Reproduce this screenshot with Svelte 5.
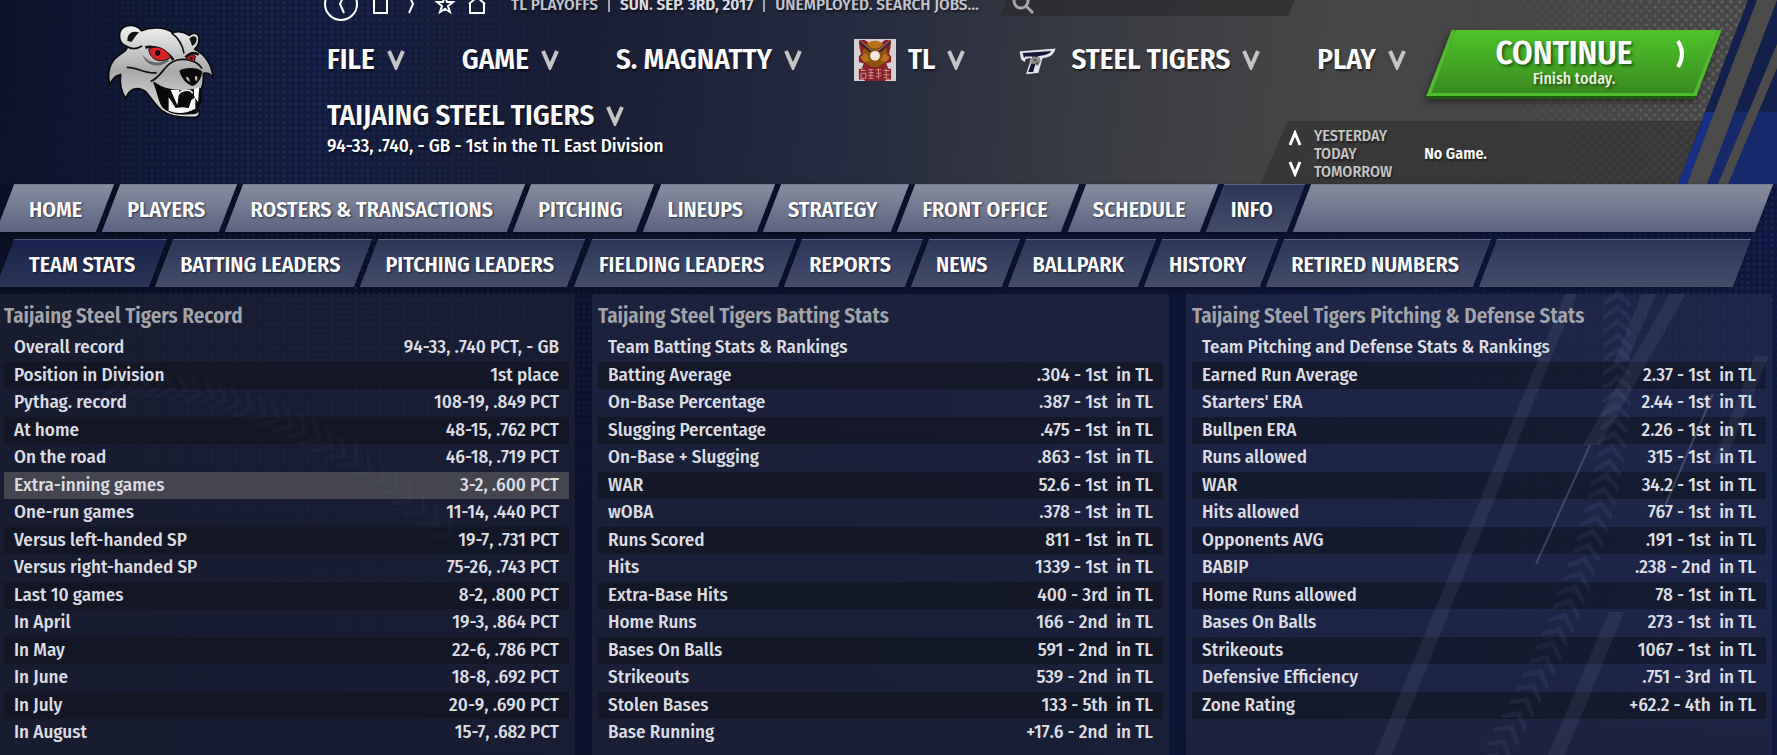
<script lang="ts">
	type Row = [label: string, value: string]
	type Panel = { title: string; subtitle?: string; rows: Row[] }

	const menus = [
		{ label: 'FILE' },
		{ label: 'GAME' },
		{ label: 'S. MAGNATTY' },
		{ label: 'TL', logo: 'league' },
		{ label: 'STEEL TIGERS', logo: 'team' },
		{ label: 'PLAY' }
	]

	const sections = [
		'HOME',
		'PLAYERS',
		'ROSTERS & TRANSACTIONS',
		'PITCHING',
		'LINEUPS',
		'STRATEGY',
		'FRONT OFFICE',
		'SCHEDULE',
		'INFO'
	]

	const pages = [
		'TEAM STATS',
		'BATTING LEADERS',
		'PITCHING LEADERS',
		'FIELDING LEADERS',
		'REPORTS',
		'NEWS',
		'BALLPARK',
		'HISTORY',
		'RETIRED NUMBERS'
	]

	const panels: Panel[] = [
		{
			title: 'Taijaing Steel Tigers Record',
			rows: [
				['Overall record', '94-33, .740 PCT, - GB'],
				['Position in Division', '1st place'],
				['Pythag. record', '108-19, .849 PCT'],
				['At home', '48-15, .762 PCT'],
				['On the road', '46-18, .719 PCT'],
				['Extra-inning games', '3-2, .600 PCT'],
				['One-run games', '11-14, .440 PCT'],
				['Versus left-handed SP', '19-7, .731 PCT'],
				['Versus right-handed SP', '75-26, .743 PCT'],
				['Last 10 games', '8-2, .800 PCT'],
				['In April', '19-3, .864 PCT'],
				['In May', '22-6, .786 PCT'],
				['In June', '18-8, .692 PCT'],
				['In July', '20-9, .690 PCT'],
				['In August', '15-7, .682 PCT']
			]
		},
		{
			title: 'Taijaing Steel Tigers Batting Stats',
			subtitle: 'Team Batting Stats & Rankings',
			rows: [
				['Batting Average', '.304 - 1st  in TL'],
				['On-Base Percentage', '.387 - 1st  in TL'],
				['Slugging Percentage', '.475 - 1st  in TL'],
				['On-Base + Slugging', '.863 - 1st  in TL'],
				['WAR', '52.6 - 1st  in TL'],
				['wOBA', '.378 - 1st  in TL'],
				['Runs Scored', '811 - 1st  in TL'],
				['Hits', '1339 - 1st  in TL'],
				['Extra-Base Hits', '400 - 3rd  in TL'],
				['Home Runs', '166 - 2nd  in TL'],
				['Bases On Balls', '591 - 2nd  in TL'],
				['Strikeouts', '539 - 2nd  in TL'],
				['Stolen Bases', '133 - 5th  in TL'],
				['Base Running', '+17.6 - 2nd  in TL']
			]
		},
		{
			title: 'Taijaing Steel Tigers Pitching & Defense Stats',
			subtitle: 'Team Pitching and Defense Stats & Rankings',
			rows: [
				['Earned Run Average', '2.37 - 1st  in TL'],
				["Starters' ERA", '2.44 - 1st  in TL'],
				['Bullpen ERA', '2.26 - 1st  in TL'],
				['Runs allowed', '315 - 1st  in TL'],
				['WAR', '34.2 - 1st  in TL'],
				['Hits allowed', '767 - 1st  in TL'],
				['Opponents AVG', '.191 - 1st  in TL'],
				['BABIP', '.238 - 2nd  in TL'],
				['Home Runs allowed', '78 - 1st  in TL'],
				['Bases On Balls', '273 - 1st  in TL'],
				['Strikeouts', '1067 - 1st  in TL'],
				['Defensive Efficiency', '.751 - 3rd  in TL'],
				['Zone Rating', '+62.2 - 4th  in TL']
			]
		}
	]

	let activeSection = $state('INFO')
	let activePage = $state('TEAM STATS')
	let selected = $state('Extra-inning games')

	// tyre tread: chevrons that follow a curve, turning as they go
	const rightTread = Array.from({ length: 34 }, (_, i) => {
		const y = i * 14
		const t = Math.max(0, (y - 80) / 385)
		return { x: 206 - 124 * t ** 1.8, y, turn: 4 + 30 * t }
	})
	const leftTread = Array.from({ length: 26 }, (_, i) => {
		const t = i / 25
		return { x: 120 + 330 * t, y: 90 + 150 * t ** 2, turn: 100 + 35 * t }
	})
</script>

{#snippet chevron()}
	<svg class="chevron" viewBox="0 0 18 20" aria-hidden="true"><path d="M2 1L9 17L16 1" /></svg>
{/snippet}

{#snippet tabs(items: string[], active: string, pick: (item: string) => void)}
	{#each items as item (item)}
		<a href="#{item.toLowerCase().replaceAll(' ', '-')}" class:active={item === active} onclick={() => pick(item)}>{item}</a>
	{/each}
	<span class="filler"></span>
{/snippet}

<div class="app">
	<header>
		<svg class="stripes" viewBox="0 0 300 184" aria-hidden="true">
			<defs>
				<pattern id="holes" width="9" height="9" patternUnits="userSpaceOnUse">
					<circle cx="2" cy="2" r="2" />
					<circle cx="7" cy="7" r="2" />
				</pattern>
				<linearGradient id="fade">
					<stop offset="0" stop-color="#000" />
					<stop offset="1" stop-color="#fff" />
				</linearGradient>
				<mask id="fade-mask"><rect width="300" height="184" fill="url(#fade)" /></mask>
			</defs>
			<g mask="url(#fade-mask)"><rect width="300" height="184" fill="url(#holes)" class="holes" /></g>
			<path fill="#13204d" d="M271 0H300V112H228Z" />
			<path fill="#16296b" d="M228 112H300V184H201Z" />
			<path fill="#173086" d="M228 112H239L210 184H201Z" />
			<path fill="#4b4b4b" d="M280 0H300L230 184H210Z" />
			<path fill="#4b4b4b" d="M300 44V68L251 184H241Z" />
		</svg>

		<svg class="team-logo" viewBox="0 0 420 360" role="img" aria-label="Steel Tigers">
			<defs>
				<linearGradient id="fur" x1="0" y1="0" x2="0" y2="1">
					<stop offset="0" stop-color="#f2f2f2" />
					<stop offset=".5" stop-color="#a9a9ab" />
					<stop offset="1" stop-color="#e4e4e4" />
				</linearGradient>
			</defs>
			<g stroke="#0a0a0c" stroke-width="5" stroke-linejoin="round">
				<path fill="url(#fur)" d="M108 108C82 98 82 58 108 49C128 42 148 50 154 62C186 48 226 52 248 68C266 62 284 66 298 76C308 66 326 68 327 86C328 100 322 110 314 118C344 132 368 166 369 204C362 192 352 188 340 190C342 214 336 234 330 246C336 262 332 280 322 292C332 304 330 318 318 321C276 324 240 320 216 302C194 284 184 264 168 246C144 226 116 236 108 266C92 244 88 222 92 194C78 196 66 206 60 226C50 192 58 156 84 138C96 128 108 126 112 112Z" />
				<path fill="#080809" d="M192 218C224 242 268 250 330 236C334 258 332 280 320 294C328 304 320 312 304 310C268 314 234 308 218 290C206 270 204 244 192 218Z" />
			</g>
			<path fill="#111" d="M112 92C112 68 130 60 148 68C136 74 132 88 124 96Z" />
			<path fill="#111" d="M298 88C304 76 320 76 320 88C320 98 312 106 306 108C304 100 302 94 298 88Z" />
			<path fill="#666" d="M158 134C176 160 210 164 230 148C238 144 240 152 228 158C200 176 166 164 158 134Z" />
			<path fill="#fff" d="M242 240L268 240L262 286ZM312 236L328 232L324 276L312 258ZM236 262L246 276L256 294L278 292L296 294L304 270L316 262L316 296Q276 318 236 302Z" />
			<path fill="none" stroke="#eee" stroke-width="5" d="M264 256C270 238 302 236 308 250" />
			<path fill="#0b0b0b" d="M268 182C286 170 324 172 336 184C336 204 322 224 308 228C290 222 274 206 268 182Z" />
			<path fill="#bbb" d="M288 200Q298 200 300 216Q288 210 288 200ZM316 198Q326 196 320 214Q312 208 316 198Z" />
			<g fill="none" stroke="#0e0e10" stroke-width="5">
				<path d="M108 108C126 120 140 118 156 108M244 68C262 82 278 104 282 130M110 172C140 170 166 194 200 188M182 214C214 204 222 160 262 150C290 144 322 152 336 176" />
				<path stroke-width="8" d="M166 112C200 106 234 126 250 150M286 142C300 128 314 126 326 134" />
			</g>
			<path fill="#d8222a" stroke="#111" stroke-width="3" d="M176 118C198 102 230 116 242 142C214 160 182 154 176 118Z" />
			<circle cx="203" cy="129" r="8" fill="#180406" />
			<path fill="#c4161e" stroke="#111" stroke-width="3" d="M288 148C296 132 310 130 316 138L313 156Z" />
			<circle cx="304" cy="145" r="4" fill="#180406" />
		</svg>

		<div class="status">
			<div class="shortcuts">
				<button aria-label="Back" class="back"><svg viewBox="0 0 36 36"><circle cx="18" cy="18" r="16" /><path d="M21 9L17 18L21 27" /></svg></button>
				<button aria-label="Stop"><svg viewBox="0 0 20 24"><path d="M3 3V21H16V3Z" /></svg></button>
				<button aria-label="Forward"><svg viewBox="0 0 20 24"><path d="M6 3L10 12L6 21" /></svg></button>
				<button aria-label="Favourites"><svg viewBox="0 0 20 24"><path d="M10 4L12 10H18L13 14L15 20L10 17L5 20L7 14L2 10H8Z" /></svg></button>
				<button aria-label="Home"><svg viewBox="0 0 20 24"><path d="M2 12L10 5L18 12M3 11V21H17V11" /></svg></button>
			</div>
			<p>
				<span>TL PLAYOFFS</span><i></i><strong>SUN. SEP. 3RD, 2017</strong><i></i><a href="#jobs">UNEMPLOYED. SEARCH JOBS...</a>
			</p>
			<label class="search">
				<svg viewBox="0 0 24 24" aria-hidden="true"><circle cx="10" cy="9" r="7" /><path d="M15 14L22 21" /></svg>
				<input type="search" aria-label="Search" />
			</label>
		</div>

		<div class="menu-row">
			<nav class="menu">
				{#each menus as menu (menu.label)}
					<button>
						{#if menu.logo === 'league'}
							<svg class="logo" viewBox="0 0 120 120" aria-hidden="true">
								<path fill="#d5d0d4" d="M0 0H120V120H0Z" />
								<path fill="#8a2029" d="M14 4L30 2L44 12Q60 -2 76 12L90 2L106 4L104 26L100 42L106 50V66L92 70L98 84L106 86V116H92L88 120H32L28 116H14V86L22 84L28 70L14 66V50L20 42L16 26Z" />
								<circle cx="60" cy="44" r="36" fill="#8c540f" />
								<path fill="#b8731a" d="M18 52L34 40L44 62L28 66ZM102 52L86 40L76 62L92 66ZM36 14Q60 -4 84 14L70 26H50Z" />
								<path stroke="#47242a" stroke-width="11" d="M18 8L50 36M102 8L70 36" />
								<path stroke="#a9765c" stroke-width="3" d="M20 6L52 34M100 6L68 34" />
								<circle cx="60" cy="48" r="14" fill="#f1e7da" />
								<path fill="none" stroke="#c98d84" stroke-width="3" d="M18 90H34M20 98H34V112H20V98M26 84L20 90M40 88H56M42 96H56M48 86V112M40 104H56M42 112H56M62 88H78M70 84V114M64 98L78 98M62 108L78 104M84 90H102M92 84V114M84 102H102M86 110L100 112" />
							</svg>
						{:else if menu.logo === 'team'}
							<svg class="logo" viewBox="0 0 120 120" aria-hidden="true">
								<path fill="#e3e3e8" stroke="#20212c" stroke-width="2" d="M6 34L112 26Q106 50 84 54L74 56L62 98L24 102L34 72L38 56L26 58L22 68L10 58Z" />
								<path fill="#16183a" d="M16 40L98 34Q90 46 66 48L54 52L56 60L46 94L32 94L42 66L44 50L24 50L20 54Z" />
								<path fill="#8b8b8b" d="M46 50L64 52L68 62L60 78L48 70L38 72L40 58Z" />
								<path fill="#3b3b3b" d="M48 58H56V62H48ZM54 66L62 68L56 74Z" />
							</svg>
						{/if}
						{menu.label}
						{@render chevron()}
					</button>
				{/each}
			</nav>
			<button class="continue">
				<span class="face">
					<span class="action">CONTINUE</span>
					<small>Finish today.</small>
				</span>
				<svg viewBox="0 0 12 30" aria-hidden="true"><path d="M3 2Q11 15 3 28" /></svg>
			</button>
		</div>

		<div class="team-row">
			<div class="team">
				<h1>TAIJAING STEEL TIGERS {@render chevron()}</h1>
				<p>94-33, .740, - GB - 1st in the TL East Division</p>
			</div>
			<div class="games">
				<div class="steps">
					<button aria-label="Previous day"><svg viewBox="0 0 14 16"><path d="M2 15L7 3L12 15" /></svg></button>
					<button aria-label="Next day"><svg viewBox="0 0 14 16"><path d="M2 1L7 13L12 1" /></svg></button>
				</div>
				<ul>
					<li>YESTERDAY</li>
					<li>TODAY</li>
					<li>TOMORROW</li>
				</ul>
				<strong>No Game.</strong>
			</div>
		</div>
	</header>

	<nav class="tabs sections">
		{@render tabs(sections, activeSection, (item) => (activeSection = item))}
	</nav>
	<nav class="tabs pages">
		{@render tabs(pages, activePage, (item) => (activePage = item))}
	</nav>

	<main>
		<svg class="streaks left" viewBox="0 0 500 470" aria-hidden="true">
			{#each leftTread as mark}
				<path class="tread" d="M-14 8L0 -6L14 8L14 14L0 1L-14 14Z" transform="translate({mark.x} {mark.y}) rotate({mark.turn})" />
			{/each}
		</svg>

		{#each panels as panel (panel.title)}
			<section>
				<h2>{panel.title}</h2>
				<table>
					<tbody>
						{#if panel.subtitle}
							<tr><th colspan="2">{panel.subtitle}</th></tr>
						{/if}
						{#each panel.rows as [label, value] (label)}
							<tr class:selected={label === selected} onmouseenter={() => (selected = label)}>
								<th scope="row">{label}</th>
								<td>{value}</td>
							</tr>
						{/each}
					</tbody>
				</table>
			</section>
		{/each}

		<svg class="streaks right" viewBox="0 0 360 468" aria-hidden="true">
			<path d="M153 0H165L-23 468H-40Z" />
			<path d="M230 0H244L215 68H202ZM258 0H274L188 151H171Z" />
			<path d="M343 62H357L312 170H300Z" />
			<path d="M197 318H212L150 468H133Z" />
			<path class="line" d="M178 151L124 270M301 100L253 212" />
			{#each rightTread as mark}
				<path class="tread" d="M-14 8L0 -4L14 8L14 13L0 3L-14 13Z" transform="translate({mark.x} {mark.y}) rotate({mark.turn})" />
			{/each}
		</svg>
	</main>
</div>

<style>
	:global(body) {
		margin: 0;
		background: #0b122c;
	}

	.app {
		--lean: -21deg;
		--dots: radial-gradient(circle at 2px 2px, rgb(70 95 150 / 0.22) 1px, transparent 2px) 0 0 / 6px 6px;
		position: relative;
		display: flex;
		flex-direction: column;
		min-height: 100vh;
		overflow: hidden;
		font-family: 'Fira Sans Condensed', 'Roboto Condensed', sans-serif;
		font-size: 19px;
		font-weight: 500;
		color: #fff;
		background: linear-gradient(90deg, #0a1026, #0c1330 50%, #0e1840);
	}

	.app::before {
		content: '';
		position: absolute;
		inset: 184px 0 0;
		background: var(--dots);
		mask: radial-gradient(circle at 20% 15%, #000, transparent 30%), radial-gradient(circle at 100% 10%, #000, transparent 30%);
	}

	button {
		display: flex;
		align-items: center;
		padding: 0;
		border: 0;
		background: none;
		color: inherit;
		font: inherit;
		cursor: pointer;
	}

	a {
		color: inherit;
		text-decoration: none;
	}

	h1,
	h2,
	p,
	ul {
		margin: 0;
		padding: 0;
		list-style: none;
	}

	svg {
		flex: none;
		fill: none;
	}

	header {
		position: relative;
		display: flex;
		flex-direction: column;
		height: 184px;
		padding-left: 327px;
		text-shadow: 1px 2px 2px rgb(0 0 0 / 0.5);
		background: linear-gradient(95deg, #0c132b, #121c40 18%, #181d34 32%, #252b40 48%, #373a42 60%, #464646 74%);
	}

	header::before {
		content: '';
		position: absolute;
		inset: 0;
		background: var(--dots);
		mask: linear-gradient(90deg, transparent, #000 15%, transparent 38%);
	}

	.stripes {
		position: absolute;
		top: 0;
		right: 0;
		width: 300px;
		height: 184px;
	}

	.stripes .holes {
		opacity: 0.6;
	}

	#holes circle {
		fill: #77746f;
	}

	.team-logo {
		position: absolute;
		top: 10px;
		left: 90px;
		width: 140px;
		height: 120px;
	}

	.status,
	.menu-row,
	.team-row {
		position: relative;
		display: flex;
	}

	.status {
		align-items: center;
		height: 34px;
		margin: -13px 0 0 -4px;
		font-size: 17px;
		color: #c3c5cd;
	}

	.status p {
		display: flex;
		align-items: center;
		margin-left: 24px;
		white-space: nowrap;
	}

	.status i {
		width: 2px;
		height: 16px;
		margin: 0 10px;
		background: #9fa2ad;
	}

	.status strong {
		font-weight: 600;
		color: #dcdde2;
	}

	.shortcuts {
		display: flex;
		align-items: center;
		gap: 12px;
	}

	.shortcuts svg {
		width: 20px;
		height: 24px;
		stroke: #fff;
		stroke-width: 2px;
	}

	.shortcuts .back svg {
		width: 36px;
		height: 36px;
	}

	.search {
		position: relative;
		display: flex;
		align-items: center;
		width: 288px;
		height: 24px;
		margin-left: 26px;
	}

	.search::before {
		content: '';
		position: absolute;
		inset: 0;
		background: rgb(40 40 42 / 0.6);
		transform: skewX(var(--lean));
	}

	.search svg {
		position: relative;
		width: 24px;
		height: 24px;
		margin-left: 6px;
		stroke: #a5a6aa;
		stroke-width: 3px;
	}

	.search input {
		position: relative;
		flex: 1;
		min-width: 0;
		border: 0;
		background: none;
		color: inherit;
		font: inherit;
	}

	.menu-row {
		justify-content: space-between;
		align-items: center;
		height: 68px;
		margin-top: 8px;
		padding-right: 68px;
	}

	.menu {
		display: flex;
		align-items: center;
		align-self: flex-start;
		gap: 57px;
		height: 62px;
	}

	.menu button,
	h1 {
		display: flex;
		align-items: center;
		gap: 12px;
		font-size: 29px;
		font-weight: 600;
		line-height: 36px;
		white-space: nowrap;
		text-shadow: inherit;
	}

	.chevron {
		width: 18px;
		height: 20px;
		stroke: #c4c4c6;
		stroke-width: 4px;
	}

	.logo {
		width: 42px;
		height: 42px;
		margin-left: -5px;
	}

	.continue {
		position: relative;
		justify-content: center;
		width: 270px;
		height: 66px;
		line-height: 18px;
		text-shadow: 2px 2px 3px rgb(0 0 0 / 0.5);
	}

	.continue::before {
		content: '';
		position: absolute;
		inset: 0;
		box-sizing: border-box;
		border: solid #4fbb2d;
		border-width: 0 4px 3px;
		background: linear-gradient(#4fc428, #3a8a22);
		box-shadow:
			0 3px 0 #1d5a0f,
			0 5px 6px rgb(0 0 0 / 0.5);
		transform: skewX(var(--lean));
	}

	.face {
		position: relative;
		display: flex;
		flex-direction: column;
		align-items: center;
		padding-bottom: 2px;
	}

	.action {
		padding-right: 20px;
		font-size: 33px;
		font-weight: 600;
		line-height: 34px;
	}

	.continue small {
		font-size: 16px;
		color: #e3f3dc;
	}

	.continue svg {
		position: absolute;
		top: 9px;
		right: 22px;
		width: 12px;
		height: 30px;
		stroke: #fff;
		stroke-width: 4px;
	}

	.team-row {
		flex: 1;
		justify-content: space-between;
	}

	.team {
		padding-top: 1px;
	}

	.team p {
		line-height: 24px;
	}

	.games {
		position: relative;
		display: flex;
		align-items: center;
		align-self: flex-end;
		gap: 12px;
		box-sizing: border-box;
		width: 489px;
		height: 63px;
		padding-top: 2px;
		font-size: 16px;
		line-height: 18px;
		color: #c5c5c5;
	}

	.games::before {
		content: '';
		position: absolute;
		inset: 0 74px 0 -28px;
		background: rgb(42 42 44 / 0.5);
		clip-path: polygon(28px 0, 100% 0, calc(100% - 25px) 100%, 0 100%);
	}

	.games > * {
		position: relative;
	}

	.games strong {
		margin-left: 20px;
		font-weight: 600;
		color: #fff;
	}

	.steps {
		display: flex;
		flex-direction: column;
		gap: 15px;
	}

	.steps svg {
		width: 14px;
		height: 16px;
		stroke: #fff;
		stroke-width: 3px;
	}

	.tabs {
		display: flex;
		gap: 6px;
		padding-left: 5px;
		font-size: 22px;
		font-weight: 600;
		line-height: 51px;
		text-shadow: 1px 1px 2px rgb(10 15 40 / 0.7);
		white-space: nowrap;
	}

	.tabs a,
	.filler {
		position: relative;
		z-index: 0;
		height: 48px;
		padding: 0 23px 0 16px;
	}

	.tabs a:first-child {
		padding-left: 24px;
	}

	.filler {
		flex: 1;
		padding: 0;
	}

	.tabs a::before,
	.filler::before {
		content: '';
		position: absolute;
		inset: 0;
		z-index: -1;
		box-sizing: border-box;
		border-top: 1px solid rgb(255 255 255 / 0.15);
		background: linear-gradient(#2b3759, #454c6b);
		box-shadow: 0 2px 4px rgb(0 0 0 / 0.4);
		transform: skewX(var(--lean));
	}

	.sections {
		padding-right: 13px;
	}

	.sections a:not(.active)::before,
	.sections .filler::before {
		background: linear-gradient(#878c9f, #5c6382);
	}

	.pages {
		margin-top: 7px;
		padding-right: 35px;
	}

	.pages .active::before {
		background: linear-gradient(#17234c, #2c3558);
	}

	main {
		position: relative;
		flex: 1;
		display: grid;
		grid-template-columns: 577fr 577fr 586fr;
		gap: 17px;
		margin: 7px 5px 0 -2px;
	}

	section {
		padding: 6px 6px 8px;
		background: linear-gradient(rgb(36 42 70 / 0.65), rgb(34 38 58 / 0.6));
	}

	section:first-of-type {
		background: rgb(34 37 56 / 0.6);
	}

	section:last-of-type {
		background: linear-gradient(rgb(38 46 80 / 0.6), rgb(38 46 80 / 0.6) 80%, rgb(38 42 66 / 0.6));
	}

	h2 {
		margin-bottom: 2px;
		font-size: 21px;
		font-weight: 600;
		line-height: 32px;
		color: #a3a4aa;
	}

	table {
		width: 100%;
		border-collapse: collapse;
		color: #dcdde2;
	}

	tr {
		height: 28px;
		line-height: 26px;
		vertical-align: top;
	}

	tr:nth-child(even) {
		height: 27px;
		background: rgb(15 18 28 / 0.55);
	}

	tr.selected:nth-child(n) {
		background: #44454e;
	}

	th,
	td {
		padding: 0 10px;
		font-weight: 500;
		text-align: left;
		white-space: pre;
	}

	td {
		text-align: right;
	}

	.streaks {
		position: absolute;
		top: 0;
		fill: rgb(150 160 200 / 0.1);
		pointer-events: none;
	}

	.streaks.left {
		left: 0;
		width: 500px;
		height: 470px;
		opacity: 0.4;
	}

	.streaks.right {
		right: 0;
		width: 360px;
		height: 468px;
		overflow: visible;
	}

	.streaks .line {
		stroke: rgb(170 180 220 / 0.25);
		stroke-width: 2px;
	}

	.tread {
		fill: rgb(150 165 215 / 0.08);
	}
</style>
